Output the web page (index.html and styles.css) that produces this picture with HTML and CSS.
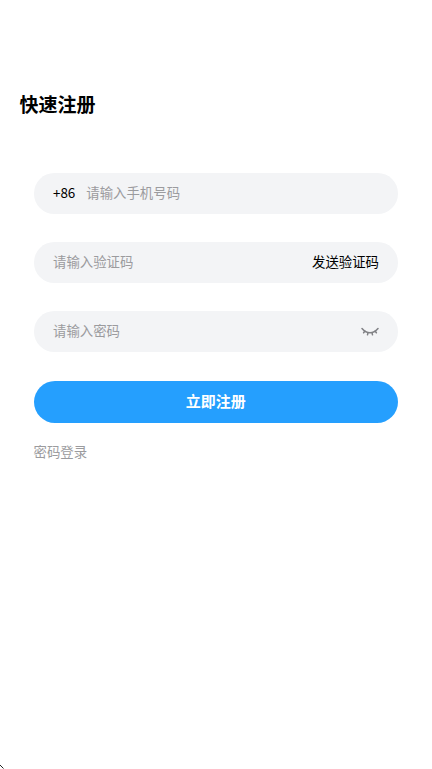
FILE: index.html
```html
<!DOCTYPE html>
<html lang="zh-CN">
<head>
    <meta charset="UTF-8">
    <meta name="viewport" content="width=device-width, initial-scale=1.0">
    <title>快速注册</title>
    <link rel="stylesheet" href="styles.css">
</head>
<body>
    <h1 class="title">快速注册</h1>
    <div class="form">
        <div class="field">
            <span class="prefix">+86</span>
            <span class="placeholder">请输入手机号码</span>
        </div>
        <div class="field">
            <span class="placeholder">请输入验证码</span>
            <span class="send-code">发送验证码</span>
        </div>
        <div class="field">
            <span class="placeholder">请输入密码</span>
            <svg class="eye" width="18" height="10" viewBox="0 0 18 10" fill="none" stroke="#808185" stroke-width="1.5" stroke-linecap="round">
                <path d="M1 1.500C4 5 6.500 5.800 9 5.800S14 5 17 1.500"/>
                <path d="M3.800 4.200L2.600 5.800M7 5.700L6.500 7.800M11 5.700L11.500 7.800M14.200 4.200L15.400 5.800"/>
            </svg>
        </div>
        <button class="submit">立即注册</button>
        <a class="login-link">密码登录</a>
    </div>
    <svg class="corner" width="6" height="6" viewBox="0 0 6 6" fill="none" stroke="#222" stroke-width="1">
        <path d="M0 2L3.500 5.500"/>
    </svg>
</body>
</html>
```
FILE: styles.css
```css
html, body {
    height: 100%;
}

body {
    margin: 0;
    position: relative;
    overflow: hidden;
    background-color: #fff;
    font-family: "Noto Sans CJK SC", "Noto Sans", sans-serif;
}

.title {
    margin: 0;
    padding: 90px 0 0 19.500px;
    font-size: 19px;
    line-height: 27px;
    font-weight: 700;
    color: #000;
}

.form {
    display: flex;
    flex-direction: column;
    padding: 56px 34px 0 33.500px;
}

.field {
    display: flex;
    align-items: center;
    height: 40.500px;
    margin-bottom: 28.500px;
    padding: 0 19px 3px 19.500px;
    box-sizing: border-box;
    border-radius: 20.250px;
    background-color: #f3f4f6;
    font-size: 13.400px;
    line-height: 20px;
}

.field:nth-child(3) {
    margin-bottom: 29.500px;
}

.prefix {
    margin-right: 11px;
    color: #000;
}

.placeholder {
    flex: 1;
    color: #9b9b9e;
}

.send-code {
    color: #000;
}

.eye {
    margin: 4px 0 0 0;
}

.submit {
    height: 42px;
    padding: 0 0 4px;
    border: none;
    border-radius: 21px;
    background-color: #259ffe;
    color: #fff;
    font-family: inherit;
    font-size: 15px;
    font-weight: 700;
}

.login-link {
    margin-top: 18px;
    font-size: 13.400px;
    line-height: 20px;
    color: #9b9b9e;
}

.corner {
    position: absolute;
    left: 0;
    bottom: 0;
}
```
